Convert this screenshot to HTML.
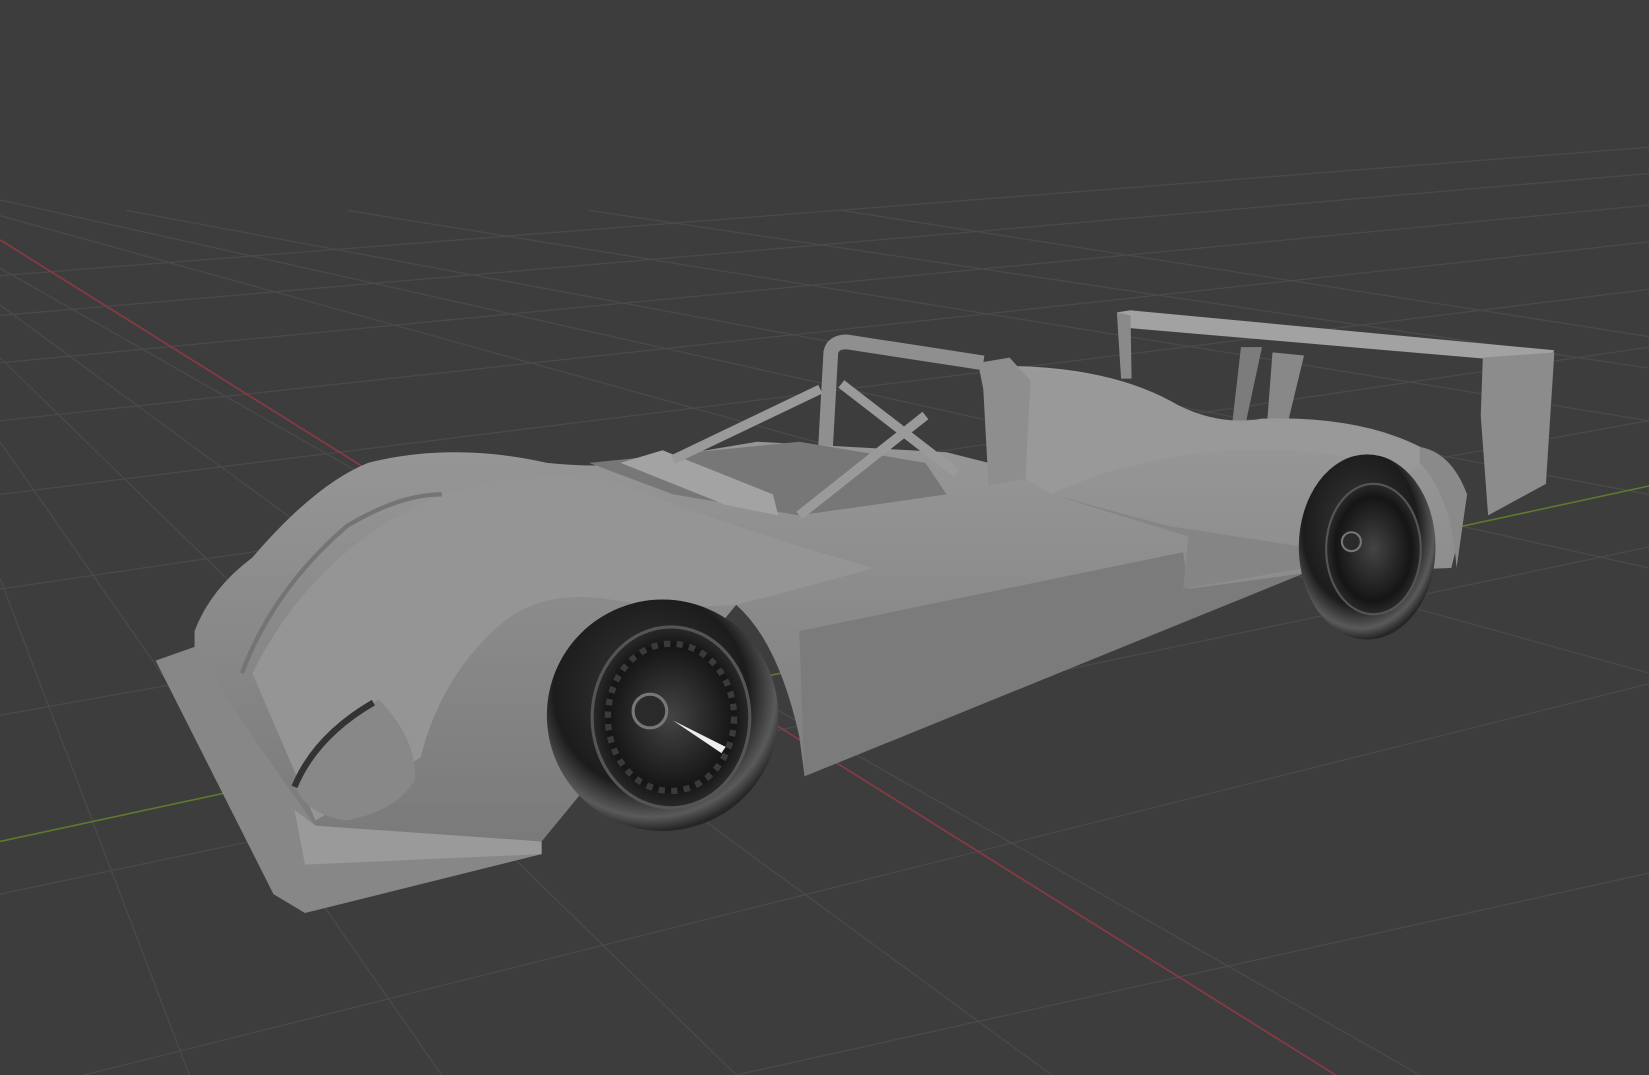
<!DOCTYPE html>
<html><head><meta charset="utf-8"><style>
html,body{margin:0;padding:0;background:#3d3d3d;overflow:hidden}
svg{display:block}
</style></head><body>
<svg width="1649" height="1075" viewBox="0 0 1568 1022" preserveAspectRatio="none" xmlns="http://www.w3.org/2000/svg">
<defs>
<radialGradient id="tire" cx="0.45" cy="0.4" r="0.6">
<stop offset="0" stop-color="#3a3a3a"/><stop offset="0.7" stop-color="#1c1c1c"/><stop offset="0.9" stop-color="#5a5a5a"/><stop offset="1" stop-color="#262626"/>
</radialGradient>
<radialGradient id="rim" cx="0.5" cy="0.5" r="0.5">
<stop offset="0" stop-color="#444"/><stop offset="0.8" stop-color="#151515"/><stop offset="1" stop-color="#2a2a2a"/>
</radialGradient>
<linearGradient id="body" x1="0" y1="0" x2="0" y2="1">
<stop offset="0" stop-color="#9c9c9c"/><stop offset="1" stop-color="#7a7a7a"/>
</linearGradient>
</defs>
<rect width="1568" height="1022" fill="#3d3d3d"/>
<g stroke="#4a4a4a" stroke-width="1.2" fill="none">
<path d="M0 262 L1568 140 M0 300 L1568 165 M0 345 L1568 195 M0 400 L1568 230 M0 470 L1568 275 M0 560 L1568 330 M0 680 L1568 400 M0 850 L1568 520 M80 1022 L1568 650 M700 1022 L1568 830"/>
<path d="M0 190 L1568 540 M0 205 L1568 640 M0 255 L1350 1022 M0 290 L1000 1022 M0 340 L700 1022 M0 420 L420 1022 M0 550 L180 1022 M120 200 L1568 470 M330 200 L1568 400 M560 200 L1568 350 M800 200 L1568 320"/>
</g>
<path d="M0 228 L1270 1022" stroke="#8a3a44" stroke-width="1.5"/>
<path d="M0 800 L1568 462" stroke="#5f7a2e" stroke-width="1.5"/>
<!-- rear wing -->
<polygon points="1062,297 1075,295 1478,333 1470,346 1075,312" fill="#a2a2a2"/>
<polygon points="1062,297 1075,300 1076,360 1066,360" fill="#8a8a8a"/>
<polygon points="1180,330 1200,330 1185,400 1172,400" fill="#7c7c7c"/>
<polygon points="1210,335 1240,338 1225,400 1205,400" fill="#888"/>
<polygon points="1410,340 1478,335 1470,460 1415,490 1408,395" fill="#8c8c8c"/>
<!-- roll hoop back -->
<path d="M785 425 L790 335 Q792 325 805 325 L935 345" stroke="#8f8f8f" stroke-width="14" fill="none"/>
<!-- main body -->
<path d="M185 600 Q200 560 240 530 Q300 460 350 440 Q430 420 520 440 Q570 445 600 440 L720 420 L900 430 L940 440 L965 348 Q1060 350 1120 385 Q1160 405 1200 398 Q1300 395 1360 430 Q1395 460 1385 520 L1380 540 L1240 545 L765 738 L760 700 Q740 610 700 575 L515 800 L290 790 Q260 760 230 720 Q200 690 185 650 Z" fill="url(#body)"/>
<path d="M965 350 Q1060 352 1120 387 Q1160 407 1200 400 Q1300 397 1360 432 L1340 450 Q1250 420 1150 430 Q1060 440 1000 470 L975 455 Z" fill="#999"/>
<polygon points="930,345 960,340 980,362 975,455 940,462 935,370" fill="#8e8e8e"/>
<!-- front fender hump -->
<path d="M240 640 Q300 520 420 470 Q520 440 590 460 Q640 480 700 500 Q760 520 830 540 Q760 560 700 575 Q640 580 580 570 Q520 560 480 590 Q420 640 400 720 L300 780 Z" fill="#959595"/>
<path d="M230 640 Q260 560 330 500 Q380 470 420 470" stroke="#747474" stroke-width="4" fill="none"/>
<!-- side panel -->
<polygon points="760,600 1125,525 1130,560 1240,545 765,738" fill="#7b7b7b"/>
<polygon points="1000,470 1130,510 1125,560 1240,540 1240,520 1110,500" fill="#858585"/>
<!-- cockpit -->
<polygon points="560,440 760,420 880,440 900,470 760,490 640,470" fill="#777"/>
<polygon points="590,440 630,428 735,470 740,490 690,480" fill="#a3a3a3"/>
<path d="M640 437 L780 370 M800 365 L910 450 M760 490 L880 395" stroke="#9a9a9a" stroke-width="9" fill="none"/>
<!-- splitter -->
<polygon points="148,628 185,615 240,700 300,785 515,800 515,812 290,868 260,850" fill="#878787"/>
<polygon points="280,770 300,785 515,800 515,812 290,822" fill="#9a9a9a"/>
<!-- headlight -->
<path d="M280 745 Q300 700 360 665 Q395 700 395 740 Q380 770 330 780 Q290 775 280 745 Z" fill="#888"/>
<path d="M280 748 Q300 700 355 668" stroke="#333" stroke-width="6" fill="none"/>
<!-- front wheel -->
<ellipse cx="630" cy="680" rx="110" ry="110" fill="url(#tire)"/>
<ellipse cx="638" cy="682" rx="75" ry="86" fill="url(#rim)" stroke="#555" stroke-width="3"/>
<ellipse cx="638" cy="682" rx="60" ry="70" fill="none" stroke="#3a3a3a" stroke-width="6" stroke-dasharray="6 6"/>
<circle cx="618" cy="676" r="16" fill="#2a2a2a" stroke="#777" stroke-width="3"/>
<polygon points="640,685 690,710 686,716" fill="#eee"/>
<!-- rear wheel -->
<ellipse cx="1300" cy="520" rx="65" ry="88" fill="url(#tire)"/>
<ellipse cx="1306" cy="522" rx="45" ry="62" fill="url(#rim)" stroke="#555" stroke-width="2"/>
<circle cx="1285" cy="515" r="9" fill="#2a2a2a" stroke="#777" stroke-width="2"/>
<!-- rear fender edge -->
<path d="M1350 440 Q1380 470 1385 540 L1395 470 Q1380 430 1350 425 Z" fill="#8a8a8a"/>
</svg>
</body></html>
